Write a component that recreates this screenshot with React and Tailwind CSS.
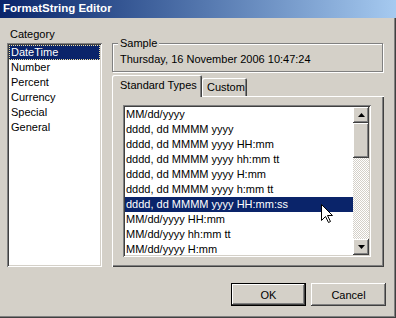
import React from "react";

// Win2000-style FormatString Editor dialog

const CATEGORIES = ["DateTime", "Number", "Percent", "Currency", "Special", "General"];

const FORMATS = [
  "MM/dd/yyyy",
  "dddd, dd MMMM yyyy",
  "dddd, dd MMMM yyyy HH:mm",
  "dddd, dd MMMM yyyy hh:mm tt",
  "dddd, dd MMMM yyyy H:mm",
  "dddd, dd MMMM yyyy h:mm tt",
  "dddd, dd MMMM yyyy HH:mm:ss",
  "MM/dd/yyyy HH:mm",
  "MM/dd/yyyy hh:mm tt",
  "MM/dd/yyyy H:mm",
];

const raised =
  "shadow-[inset_-1px_-1px_0_#404040,inset_1px_1px_0_#fff,inset_-2px_-2px_0_#808080,inset_2px_2px_0_#d4d0c8]";
const sunken =
  "shadow-[inset_1px_1px_0_#808080,inset_-1px_-1px_0_#fff,inset_2px_2px_0_#404040,inset_-2px_-2px_0_#d4d0c8]";

function Arrow({ up }) {
  return (
    <svg width="7" height="4" viewBox="0 0 7 4">
      {up ? <polygon points="3.5,0 7,4 0,4" fill="#000" /> : <polygon points="0,0 7,0 3.5,4" fill="#000" />}
    </svg>
  );
}

export default function App() {
  return (
    <div className="relative w-[396px] h-[318px] overflow-hidden bg-[#d4d0c8] text-[11px] text-black font-['Liberation_Sans',Arial,sans-serif] shadow-[inset_-1px_-1px_0_#404040,inset_-2px_-2px_0_#808080]">
      {/* title bar */}
      <div className="h-[18px] flex items-center pl-[3px] bg-linear-to-r from-[#0a246a] to-[#a6caf0] text-white font-bold text-[11.5px]">
        FormatString Editor
      </div>

      <div className="flex pl-[7px] pt-[9px]">
        {/* category column */}
        <div className="w-[95px] flex flex-col">
          <div className="h-[14px] leading-[14px] pl-[3px] mb-[2px]">Category</div>
          <div className={`h-[224px] bg-white p-[2px] ${sunken}`}>
            {CATEGORIES.map((c, i) => (
              <div
                key={c}
                className={
                  i === 0
                    ? "h-[15px] leading-[15px] pl-[2px] bg-[#0a246a] text-white outline-1 outline-dotted outline-[#f0e0a0] -outline-offset-1"
                    : "h-[15px] leading-[15px] pl-[2px]"
                }
              >
                {c}
              </div>
            ))}
          </div>
        </div>

        {/* right column */}
        <div className="ml-[10px] w-[272px] pt-[16px] flex flex-col">
          <div className="relative w-[271px] h-[29px] border border-[#808080] shadow-[inset_1px_1px_0_#fff,1px_1px_0_#fff]">
            <span className="absolute left-[5px] -top-[7px] px-[2px] leading-[13px] bg-[#d4d0c8]">Sample</span>
            <div className="pl-[7px] pt-[8px] leading-[14px] whitespace-nowrap">Thursday, 16 November 2006 10:47:24</div>
          </div>

          {/* tabs */}
          <div className="mt-[3px] h-[21px] flex items-start">
            <div className="relative z-10 h-[22px] w-[90px] pl-[8px] pt-[3px] leading-[14px] bg-[#d4d0c8] rounded-tl-[2px] rounded-tr-[2px] shadow-[inset_1px_1px_0_#fff,inset_-1px_0_0_#404040,inset_-2px_0_0_#808080] whitespace-nowrap">
              Standard Types
            </div>
            <div className="mt-[3px] h-[18px] w-[45px] pl-[5px] pt-[2px] leading-[14px] rounded-tl-[2px] rounded-tr-[2px] shadow-[inset_1px_1px_0_#fff,inset_-1px_0_0_#404040,inset_-2px_0_0_#808080]">
              Custom
            </div>
          </div>

          <div className="h-[171px] w-[272px] pt-[9px] pl-[11px] shadow-[inset_1px_1px_0_#fff,inset_-1px_-1px_0_#404040,inset_-2px_-2px_0_#808080]">
            <div className={`w-[248px] h-[152px] bg-white p-[2px] flex ${sunken}`}>
              <div className="flex-1 overflow-hidden">
                {FORMATS.map((f, i) => (
                  <div
                    key={f}
                    className={
                      i === 6
                        ? "h-[15px] leading-[15px] pl-[1px] whitespace-nowrap bg-[#0a246a] text-white"
                        : "h-[15px] leading-[15px] pl-[1px] whitespace-nowrap"
                    }
                  >
                    {f}
                  </div>
                ))}
              </div>
              <div className="w-[16px] flex flex-col">
                <div className={`h-[16px] bg-[#d4d0c8] flex items-center justify-center ${raised}`}>
                  <Arrow up />
                </div>
                <div className={`h-[35px] bg-[#d4d0c8] ${raised}`} />
                <div className="flex-1 bg-[repeating-conic-gradient(#d4d0c8_0_25%,#fff_0_50%)] bg-[length:2px_2px]" />
                <div className={`h-[16px] bg-[#d4d0c8] flex items-center justify-center ${raised}`}>
                  <Arrow />
                </div>
              </div>
            </div>
          </div>
        </div>
      </div>

      {/* buttons */}
      <div className="mt-[16px] flex justify-end gap-[5px] pr-[10px]">
        <button className={`w-[75px] h-[23px] border border-black bg-[#d4d0c8] leading-[14px] ${raised}`}>OK</button>
        <button className={`w-[75px] h-[23px] bg-[#d4d0c8] leading-[14px] ${raised}`}>Cancel</button>
      </div>

      {/* mouse pointer */}
      <svg className="absolute left-[321px] top-[204px]" width="13" height="20" viewBox="0 0 13 20">
        <path d="M0.5 0.5 L0.5 16.5 L4.5 12.5 L7.5 18.5 L9.5 17.5 L6.5 11.5 L11.5 11.5 Z" fill="#fff" stroke="#000" strokeWidth="1" />
      </svg>
    </div>
  );
}
